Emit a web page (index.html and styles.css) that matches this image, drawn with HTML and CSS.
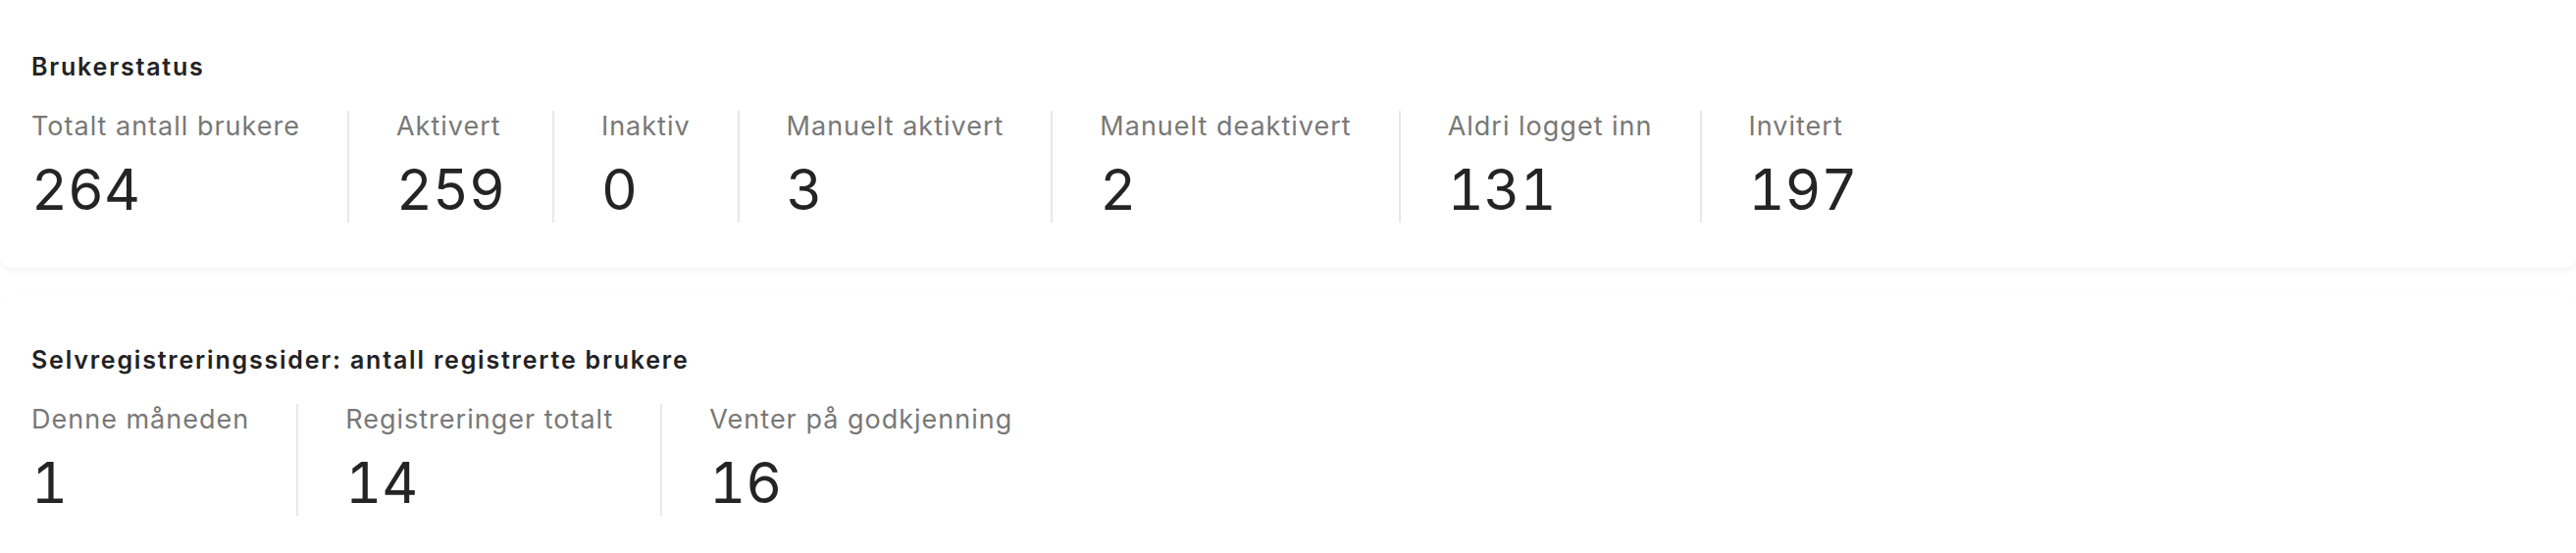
FILE: index.html
```html
<!DOCTYPE html>
<html lang="no">

<head>
    <meta charset="UTF-8">
    <meta name="viewport" content="width=device-width, initial-scale=1.0">
    <title>Brukerstatus</title>
    <link rel="stylesheet" href="styles.css">
</head>

<body>
    <section class="card">
        <h2 class="card-title">Brukerstatus</h2>
        <ul class="stats">
            <li class="stat">
                <span class="stat-label">Totalt antall brukere</span>
                <span class="stat-value">264</span>
            </li>
            <li class="stat">
                <span class="stat-label">Aktivert</span>
                <span class="stat-value">259</span>
            </li>
            <li class="stat">
                <span class="stat-label">Inaktiv</span>
                <span class="stat-value">0</span>
            </li>
            <li class="stat">
                <span class="stat-label">Manuelt aktivert</span>
                <span class="stat-value">3</span>
            </li>
            <li class="stat">
                <span class="stat-label">Manuelt deaktivert</span>
                <span class="stat-value">2</span>
            </li>
            <li class="stat">
                <span class="stat-label">Aldri logget inn</span>
                <span class="stat-value">131</span>
            </li>
            <li class="stat">
                <span class="stat-label">Invitert</span>
                <span class="stat-value">197</span>
            </li>
        </ul>
    </section>
    <section class="card">
        <h2 class="card-title">Selvregistreringssider: antall registrerte brukere</h2>
        <ul class="stats">
            <li class="stat">
                <span class="stat-label">Denne måneden</span>
                <span class="stat-value">1</span>
            </li>
            <li class="stat">
                <span class="stat-label">Registreringer totalt</span>
                <span class="stat-value">14</span>
            </li>
            <li class="stat">
                <span class="stat-label">Venter på godkjenning</span>
                <span class="stat-value">16</span>
            </li>
        </ul>
    </section>
</body>

</html>
```

FILE: styles.css
```css
* {
    margin: 0;
    padding: 0;
    box-sizing: border-box;
}

body {
    background-color: #fff;
    font-family: Inter, "Noto Sans", sans-serif;
    overflow: hidden;
}

.card {
    background-color: #fff;
    padding: 52px 32px 46px;
    border-radius: 12px;
    box-shadow: 0 3px 8px -2px rgba(0, 0, 0, 0.07);
}

.card + .card {
    margin-top: 26px;
}

.card-title {
    font-size: 25px;
    line-height: 32px;
    font-weight: 600;
    letter-spacing: 1.8px;
    color: #222224;
    margin-bottom: 29px;
}

.stats {
    display: flex;
    list-style: none;
}

.stat {
    display: flex;
    flex-direction: column;
    padding: 0 48px 1px;
    border-left: 2px solid #e7e7ec;
}

.stat:first-child {
    padding-left: 0;
    border-left: none;
}

.stat-label {
    font-size: 27px;
    line-height: 32px;
    letter-spacing: 1px;
    color: #787878;
    white-space: nowrap;
}

.stat-value {
    font-size: 57px;
    line-height: 64px;
    margin-top: 17px;
    font-variant-numeric: tabular-nums;
    color: #242424;
}
```
